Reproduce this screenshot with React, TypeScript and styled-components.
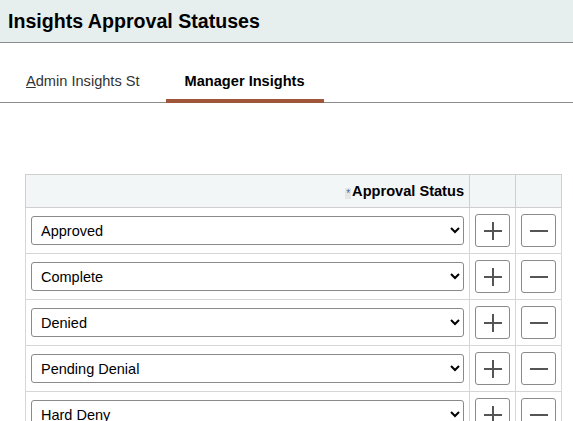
import React from 'react';
import styled, { createGlobalStyle } from 'styled-components';

const GlobalStyle = createGlobalStyle`
  body {
    margin: 0;
    background: #fff;
    font-family: "Liberation Sans", Arial, sans-serif;
    color: #000;
  }
`;

const PageHeader = styled.header`
  height: 42px;
  background: #e6eeee;
  border-bottom: 1px solid #8c8c8c;
  display: flex;
  align-items: center;
  padding-left: 8px;
`;

const PageTitle = styled.h1`
  margin: 0;
  font-size: 19.6px;
  font-weight: bold;
  color: #000;
`;

const TabBar = styled.nav`
  height: 42px;
  padding-top: 17px;
  border-bottom: 1px solid #8c8c8c;
  display: flex;
  gap: 7px;
  padding-left: 7px;
`;

const Tab = styled.div<{ active?: boolean }>`
  display: flex;
  align-items: center;
  justify-content: center;
  padding: 2px 19px 0;
  box-sizing: border-box;
  font-size: 14.6px;
  font-weight: ${props => (props.active ? 'bold' : 'normal')};
  color: ${props => (props.active ? '#000' : '#333')};
  border-bottom: 4px solid ${props => (props.active ? '#a0563b' : 'transparent')};
  margin-bottom: -1px;
`;

const AccessKey = styled.span`
  text-decoration: underline;
`;

const Content = styled.main`
  padding: 71px 10px 0 25px;
`;

const Grid = styled.table`
  border-collapse: collapse;
  width: 537px;
  border: 1px solid #c4c4c4;
`;

const HeadCell = styled.th<{ narrow?: boolean }>`
  height: 33px;
  background: #f3f6f7;
  border: 1px solid #cfcfcf;
  text-align: right;
  font-size: 14.6px;
  font-weight: bold;
  padding: 0 5px;
  width: ${props => (props.narrow ? '46px' : 'auto')};
  box-sizing: border-box;
`;

const Required = styled.span`
  display: inline-block;
  width: 6px;
  height: 11px;
  line-height: 11px;
  text-align: center;
  font-size: 10px;
  font-weight: normal;
  color: #3a6ea5;
  background: #e6e6e6;
  vertical-align: -1px;
  margin-right: 1px;
`;

const Cell = styled.td<{ center?: boolean }>`
  height: 46px;
  border: 1px solid #d6d6d6;
  padding: 0 5px;
  text-align: ${props => (props.center ? 'center' : 'left')};
  box-sizing: border-box;
`;

const StatusSelect = styled.select`
  width: 100%;
  height: 29px;
  font-family: "Liberation Sans", Arial, sans-serif;
  font-size: 14.5px;
  color: #000;
  background: #fff;
  border: 1px solid #8a8a8a;
  border-radius: 3px;
  padding: 0 5px;
`;

const IconButton = styled.button`
  width: 35px;
  height: 33px;
  display: inline-flex;
  align-items: center;
  justify-content: center;
  background: #fff;
  border: 1px solid #8a8a8a;
  border-radius: 3px;
  padding: 0;
  vertical-align: middle;
`;

const Glyph = ({ plus }: { plus?: boolean }) => (
  <svg width="20" height="20" viewBox="0 0 20 20">
    <path d="M1 10 H19" stroke="#555" strokeWidth="2" />
    {plus ? <path d="M10 1 V19" stroke="#555" strokeWidth="2" /> : null}
  </svg>
);

const statuses = ['Approved', 'Complete', 'Denied', 'Pending Denial', 'Hard Deny'];
const options = ['Approved', 'Complete', 'Denied', 'Pending Denial', 'Hard Deny', 'In Progress'];

export default function App() {
  return (
    <>
      <GlobalStyle />
      <PageHeader>
        <PageTitle>Insights Approval Statuses</PageTitle>
      </PageHeader>
      <TabBar>
        <Tab>
          <span>
            <AccessKey>A</AccessKey>dmin Insights St
          </span>
        </Tab>
        <Tab active>Manager Insights</Tab>
      </TabBar>
      <Content>
        <Grid>
          <thead>
            <tr>
              <HeadCell>
                <Required>*</Required>Approval Status
              </HeadCell>
              <HeadCell narrow />
              <HeadCell narrow />
            </tr>
          </thead>
          <tbody>
            {statuses.map(status => (
              <tr key={status}>
                <Cell>
                  <StatusSelect defaultValue={status}>
                    {options.map(o => (
                      <option key={o}>{o}</option>
                    ))}
                  </StatusSelect>
                </Cell>
                <Cell center>
                  <IconButton aria-label="Add row">
                    <Glyph plus />
                  </IconButton>
                </Cell>
                <Cell center>
                  <IconButton aria-label="Delete row">
                    <Glyph />
                  </IconButton>
                </Cell>
              </tr>
            ))}
          </tbody>
        </Grid>
      </Content>
    </>
  );
}
